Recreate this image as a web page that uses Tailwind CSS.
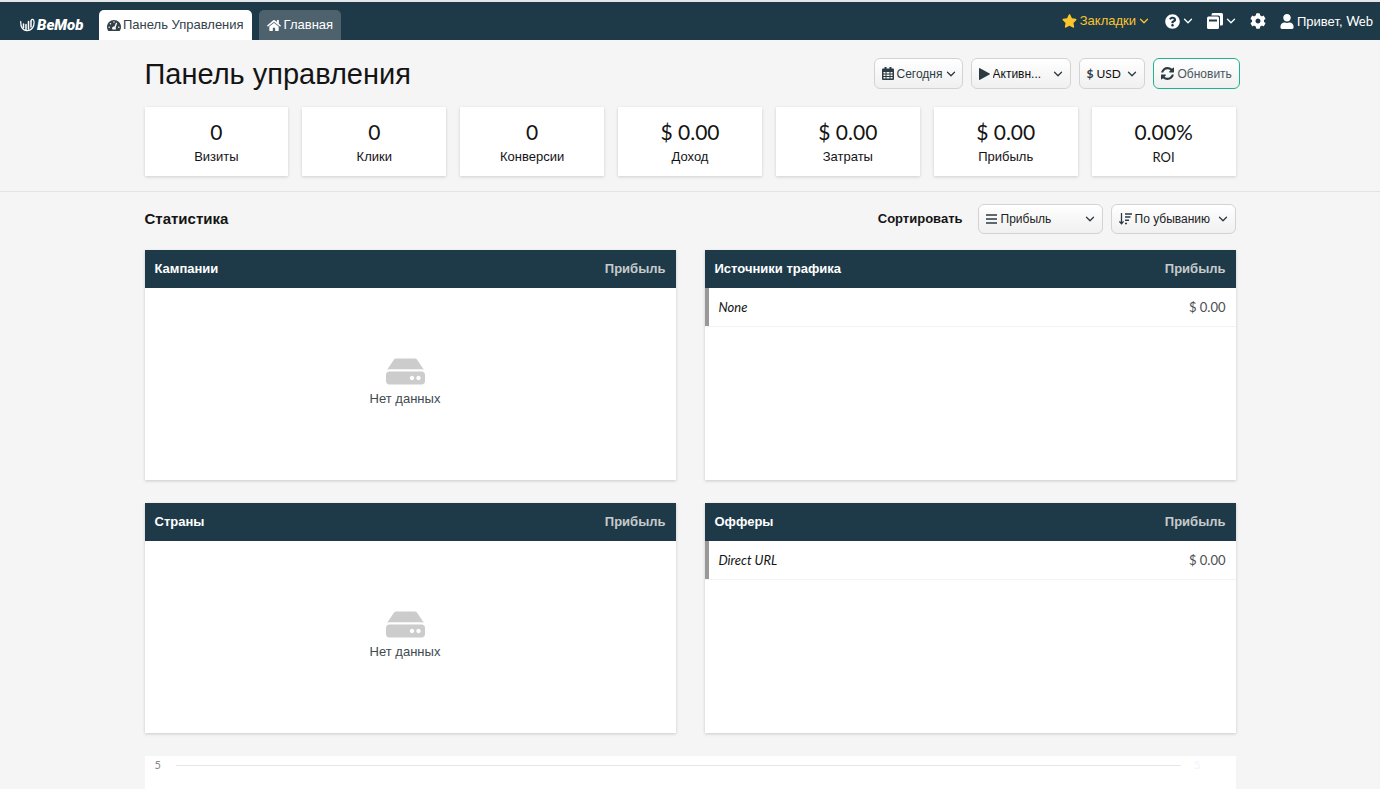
<!DOCTYPE html>
<html lang="ru">
<head>
<meta charset="utf-8">
<meta name="viewport" content="width=device-width, initial-scale=1">
<title>BeMob</title>
<script src="https://cdn.jsdelivr.net/npm/@tailwindcss/browser@4"></script>
</head>
<body class="flex min-h-screen flex-col overflow-x-hidden bg-[#f5f5f5] font-['Liberation_Sans',sans-serif] text-[13px] leading-4 text-[#141414]">

<svg class="hidden" aria-hidden="true">
  <symbol id="chevron" viewBox="0 0 10 10"><path d="M1.500 3.200 5 6.700 8.500 3.200" fill="none" stroke="currentColor" stroke-width="1.300" stroke-linecap="round" stroke-linejoin="round"/></symbol>
  <symbol id="hdd" viewBox="0 0 576 512"><path d="M576 304v96c0 26.510-21.490 48-48 48H48c-26.510 0-48-21.490-48-48v-96c0-26.510 21.490-48 48-48h480c26.510 0 48 21.490 48 48zm-48-80a79.557 79.557 0 0 1 30.777 6.165L462.250 85.374A48.003 48.003 0 0 0 422.311 64H153.689a48 48 0 0 0-39.938 21.374L17.223 230.165A79.557 79.557 0 0 1 48 224h480zm-48 96c-17.673 0-32 14.327-32 32s14.327 32 32 32 32-14.327 32-32-14.327-32-32-32zm-96 0c-17.673 0-32 14.327-32 32s14.327 32 32 32 32-14.327 32-32-14.327-32-32-32z" fill="currentColor"/></symbol>
</svg>

<div class="h-[2px] bg-[#e4e6e9]"></div>
<header class="flex h-[38px] items-end justify-between bg-[#1e3a49] pl-5 pr-[7px] text-white">
  <div class="flex items-end">
    <a href="#" aria-label="BeMob" class="flex h-[30px] w-[79px] items-center gap-[2px]">
      <svg class="h-[14px] w-[15px]" viewBox="0 0 30 28" fill="none" stroke="currentColor" stroke-linecap="round"><path d="M1.500 7C1 17 5 25 14 25c10 0 15-8 14-18-.5-5-5-6-6-1" stroke-width="2.500"/><path d="M7 12v7M12 13v10M17 7v15M22 6v12" stroke-width="3"/></svg>
      <span class="font-[Roboto,sans-serif] text-[15px] font-black italic leading-4">BeMob</span>
    </a>
    <nav class="flex gap-[7px]">
      <a href="#" class="flex h-[30px] items-center gap-[2px] rounded-t-[5px] bg-white px-2 text-[#33414a]">
        <svg class="h-[13px] w-[14px]" viewBox="0 0 576 512" fill="currentColor"><path d="M288 32C129 32 0 161 0 320c0 53 14 102 39 145 6 10 16 15 27 15h444c11 0 21-5 27-15 25-43 39-92 39-145C576 161 447 32 288 32z"/><g fill="#fff"><circle cx="288" cy="115" r="30"/><circle cx="144" cy="185" r="30"/><circle cx="90" cy="330" r="30"/><circle cx="486" cy="330" r="30"/><path d="M396 142c13 4 20 18 16 31l-58 171c19 28 12 55-2 72H224c-38-62 0-115 64-119 7 0 14 1 20 3l57-142c4-13 18-20 31-16z"/></g></svg>
        <span>Панель Управления</span>
      </a>
      <a href="#" class="flex h-[30px] items-center gap-[3px] rounded-t-[5px] bg-[#4e626e] px-2">
        <svg class="h-[13px] w-[14px]" viewBox="0 0 576 512" fill="currentColor"><path d="M280.370 148.260L96 300.110V464a16 16 0 0 0 16 16l112.060-.29a16 16 0 0 0 15.920-16V368a16 16 0 0 1 16-16h64a16 16 0 0 1 16 16v95.640a16 16 0 0 0 16 16.050L464 480a16 16 0 0 0 16-16V300L295.670 148.260a12.190 12.190 0 0 0-15.300 0zM571.600 251.470L488 182.560V44.050a12 12 0 0 0-12-12h-56a12 12 0 0 0-12 12v72.610L318.470 43a48 48 0 0 0-61 0L4.340 251.470a12 12 0 0 0-1.600 16.900l25.500 31A12 12 0 0 0 45.150 301l235.220-193.740a12.190 12.190 0 0 1 15.300 0L530.900 301a12 12 0 0 0 16.900-1.600l25.500-31a12 12 0 0 0-1.700-16.930z"/></svg>
        <span>Главная</span>
      </a>
    </nav>
  </div>
  <div class="flex h-full items-center">
    <button type="button" class="flex items-center gap-[3px] text-[#fcc52c]">
      <svg class="h-[14px] w-[15px]" viewBox="0 0 576 512" fill="currentColor"><path d="M259.300 17.800L194 150.200 47.900 171.500c-26.200 3.800-36.700 36.100-17.700 54.600l105.700 103-25 145.500c-4.500 26.300 23.200 46 46.400 33.700L288 439.600l130.700 68.700c23.200 12.200 50.900-7.400 46.400-33.700l-25-145.500 105.700-103c19-18.500 8.500-50.800-17.700-54.600L382 150.200 316.700 17.800c-11.700-23.600-45.600-23.900-57.400 0z"/></svg>
      <span>Закладки</span><svg class="size-[10px]"><use href="#chevron"/></svg>
    </button>
    <button type="button" aria-label="Помощь" class="ml-4 flex items-center gap-[3px]">
      <svg class="size-[15px]" viewBox="0 0 512 512" fill="currentColor"><path d="M504 256c0 136.997-111.043 248-248 248S8 392.997 8 256C8 119.083 119.043 8 256 8s248 111.083 248 248zM262.655 90c-54.497 0-89.255 22.957-116.549 63.758-3.536 5.286-2.353 12.415 2.715 16.258l34.699 26.310c5.205 3.947 12.621 3.008 16.665-2.122 17.864-22.658 30.113-35.797 57.303-35.797 20.429 0 45.698 13.148 45.698 32.958 0 14.976-12.363 22.667-32.534 33.976C247.128 238.528 216 254.941 216 296v4c0 6.627 5.373 12 12 12h56c6.627 0 12-5.373 12-12v-1.333c0-28.462 83.186-29.647 83.186-106.667 0-58.002-60.165-102-116.531-102zM256 338c-25.365 0-46 20.635-46 46 0 25.364 20.635 46 46 46s46-20.636 46-46c0-25.365-20.635-46-46-46z"/></svg>
      <svg class="size-[10px]"><use href="#chevron"/></svg>
    </button>
    <button type="button" aria-label="Вкладки" class="ml-[14px] flex items-center gap-[3px]">
      <svg class="size-[16px]" viewBox="0 0 32 32" fill="currentColor"><path d="M9 5V3q0-3 3-3h17q3 0 3 3v19q0 3-3 3h-3V8q0-3-3-3z"/><path fill-rule="evenodd" d="M3 7h18q3 0 3 3v19q0 3-3 3H3q-3 0-3-3V10q0-3 3-3zm1 6v4h16v-4z"/></svg>
      <svg class="size-[10px]"><use href="#chevron"/></svg>
    </button>
    <button type="button" aria-label="Настройки" class="ml-[14px]">
      <svg class="size-[16px]" viewBox="0 0 512 512" fill="currentColor"><path d="M487.400 315.700l-42.600-24.600c4.300-23.200 4.300-47 0-70.200l42.600-24.600c4.900-2.800 7.100-8.600 5.500-14-11.100-35.600-30-67.800-54.700-94.600-3.800-4.100-10-5.100-14.800-2.300L380.800 110c-17.900-15.400-38.500-27.300-60.800-35.100V25.800c0-5.600-3.900-10.500-9.400-11.700-36.700-8.200-74.300-7.800-109.200 0-5.500 1.200-9.400 6.100-9.400 11.700V75c-22.200 7.900-42.800 19.800-60.800 35.100L88.700 85.500c-4.900-2.800-11-1.900-14.800 2.300-24.700 26.700-43.600 58.900-54.700 94.600-1.700 5.400.6 11.200 5.500 14L67.300 221c-4.300 23.200-4.300 47 0 70.200l-42.600 24.600c-4.900 2.800-7.100 8.600-5.500 14 11.100 35.600 30 67.800 54.700 94.600 3.800 4.100 10 5.100 14.800 2.300l42.600-24.600c17.900 15.400 38.500 27.300 60.800 35.100v49.200c0 5.600 3.900 10.500 9.400 11.700 36.700 8.200 74.300 7.800 109.200 0 5.500-1.200 9.400-6.100 9.400-11.700v-49.200c22.200-7.900 42.800-19.800 60.800-35.100l42.600 24.600c4.900 2.800 11 1.900 14.800-2.300 24.700-26.700 43.600-58.900 54.700-94.600 1.500-5.500-.7-11.300-5.600-14.100zM256 336c-44.100 0-80-35.900-80-80s35.900-80 80-80 80 35.900 80 80-35.900 80-80 80z"/></svg>
    </button>
    <a href="#" class="ml-[14px] flex items-center gap-[3px]">
      <svg class="h-[15px] w-[14px]" viewBox="0 0 448 512" fill="currentColor"><path d="M224 256c70.700 0 128-57.300 128-128S294.700 0 224 0 96 57.300 96 128s57.300 128 128 128zm89.600 32h-16.700c-22.200 10.200-46.900 16-72.900 16s-50.600-5.800-72.900-16h-16.700C60.200 288 0 348.200 0 422.400V464c0 26.500 21.500 48 48 48h352c26.500 0 48-21.500 48-48v-41.600c0-74.200-60.200-134.400-134.400-134.400z"/></svg>
      <span>Привет, <span class="font-[Lato]">Web</span></span>
    </a>
  </div>
</header>

<main class="flex flex-1 flex-col">
  <section class="border-b border-[#e4e4e4] px-4 pt-[18px] pb-[15px]">
    <div class="mx-auto max-w-[1091px]">
      <div class="-mr-1 flex h-[31px] items-center justify-between">
        <h1 class="text-[29px] leading-8">Панель управления</h1>
        <div class="flex gap-2 text-[12px] text-[#2c3a43]">
          <button type="button" class="flex h-[31px] w-[89px] items-center gap-[3px] rounded-[6px] border border-[#d3d3d3] bg-linear-to-b from-white to-[#f0f0f0] px-[7px]">
            <svg class="h-[13px] w-[12px] shrink-0" viewBox="0 0 24 26"><path fill="currentColor" fill-rule="evenodd" d="M2 3h3V0h4v3h6V0h4v3h3q2 0 2 2v19q0 2-2 2H2q-2 0-2-2V5q0-2 2-2zM3 10v3h4v-3zm6 0v3h6v-3zm8 0v3h4v-3zM3 15v3h4v-3zm6 0v3h6v-3zm8 0v3h4v-3zM3 20v3h4v-3zm6 0v3h6v-3zm8 0v3h4v-3z"/></svg>
            <span>Сегодня</span><svg class="size-[10px] shrink-0"><use href="#chevron"/></svg>
          </button>
          <label class="flex h-[31px] w-[100px] items-center gap-[3px] rounded-[6px] border border-[#d3d3d3] bg-linear-to-b from-white to-[#f0f0f0] px-[7px]">
            <svg class="h-[12px] w-[11px] shrink-0" viewBox="0 0 11 12"><path fill="currentColor" d="M0 .7Q0-.3 1 .2l9.500 5.200q1 .6 0 1.200L1 11.800q-1 .5-1-.5z"/></svg>
            <select aria-label="Статус" class="min-w-0 flex-1 appearance-none bg-transparent text-[#111]"><option>Активн...</option></select>
            <svg class="size-[10px] shrink-0"><use href="#chevron"/></svg>
          </label>
          <label class="flex h-[31px] w-[66px] items-center gap-[3px] rounded-[6px] border border-[#d3d3d3] bg-linear-to-b from-white to-[#f0f0f0] px-[7px]">
            <span class="font-[Lato] font-bold">$</span>
            <select aria-label="Валюта" class="min-w-0 flex-1 appearance-none bg-transparent font-[Lato] font-normal text-[#111]"><option>USD</option></select>
            <svg class="size-[10px] shrink-0"><use href="#chevron"/></svg>
          </label>
          <button type="button" class="flex h-[31px] w-[87px] items-center gap-[4px] rounded-[6px] border border-[#1fb28d] bg-linear-to-b from-white to-[#f0f0f0] px-[7px]">
            <svg class="size-[13px] shrink-0" viewBox="128 128 1536 1536" fill="currentColor"><path d="M1639 1056q0 5-1 7-64 268-268 434.500t-478 166.500q-146 0-282.500-55t-243.500-157l-129 129q-19 19-45 19t-45-19-19-45v-448q0-26 19-45t45-19h448q26 0 45 19t19 45-19 45l-137 137q71 66 161 102t187 36q134 0 250-65t186-179q11-17 53-117 8-23 30-23h192q13 0 22.500 9.500t9.500 22.500zm25-800v448q0 26-19 45t-45 19h-448q-26 0-45-19t-19-45 19-45l138-138q-148-137-349-137-134 0-250 65t-186 179q-11 17-53 117-8 23-30 23h-199q-13 0-22.500-9.500t-9.500-22.500v-7q65-268 270-434.500t480-166.500q146 0 284 55.500t245 156.500l130-129q19-19 45-19t45 19 19 45z"/></svg>
            <span class="text-[#4a565e]">Обновить</span>
          </button>
        </div>
      </div>
      <dl class="mt-[18px] grid grid-cols-7 gap-[14px] text-center">
        <div class="flex h-[69px] flex-col-reverse justify-center gap-[3px] bg-white pb-px shadow-[0_1px_3px_rgba(0,0,0,0.16)]"><dt>Визиты</dt><dd class="font-[Lato] text-[21px] leading-7">0</dd></div>
        <div class="flex h-[69px] flex-col-reverse justify-center gap-[3px] bg-white pb-px shadow-[0_1px_3px_rgba(0,0,0,0.16)]"><dt>Клики</dt><dd class="font-[Lato] text-[21px] leading-7">0</dd></div>
        <div class="flex h-[69px] flex-col-reverse justify-center gap-[3px] bg-white pb-px shadow-[0_1px_3px_rgba(0,0,0,0.16)]"><dt>Конверсии</dt><dd class="font-[Lato] text-[21px] leading-7">0</dd></div>
        <div class="flex h-[69px] flex-col-reverse justify-center gap-[3px] bg-white pb-px shadow-[0_1px_3px_rgba(0,0,0,0.16)]"><dt>Доход</dt><dd class="font-[Lato] text-[21px] leading-7">$ 0.00</dd></div>
        <div class="flex h-[69px] flex-col-reverse justify-center gap-[3px] bg-white pb-px shadow-[0_1px_3px_rgba(0,0,0,0.16)]"><dt>Затраты</dt><dd class="font-[Lato] text-[21px] leading-7">$ 0.00</dd></div>
        <div class="flex h-[69px] flex-col-reverse justify-center gap-[3px] bg-white pb-px shadow-[0_1px_3px_rgba(0,0,0,0.16)]"><dt>Прибыль</dt><dd class="font-[Lato] text-[21px] leading-7">$ 0.00</dd></div>
        <div class="flex h-[69px] flex-col-reverse justify-center gap-[3px] bg-white pb-px shadow-[0_1px_3px_rgba(0,0,0,0.16)]"><dt class="font-[Lato]">ROI</dt><dd class="font-[Lato] text-[21px] leading-7">0.00%</dd></div>
      </dl>
    </div>
  </section>

  <section class="flex flex-1 flex-col px-4 pt-3">
    <div class="mx-auto flex w-full max-w-[1091px] flex-1 flex-col">
      <div class="flex items-center justify-between">
        <h2 class="text-[15px] font-bold">Статистика</h2>
        <div class="flex items-center gap-2">
          <span class="mr-[7px] font-bold">Сортировать</span>
          <label class="flex h-[30px] w-[125px] items-center gap-[4px] rounded-[6px] border border-[#d3d3d3] bg-linear-to-b from-white to-[#f0f0f0] px-[7px] text-[12px] text-[#2c3a43]">
            <svg class="h-[10px] w-[11px] shrink-0" viewBox="0 0 11 10"><path d="M0 1h11M0 5h11M0 9h11" stroke="currentColor" stroke-width="1.600"/></svg>
            <select aria-label="Поле сортировки" class="min-w-0 flex-1 appearance-none bg-transparent text-[#222]"><option>Прибыль</option></select>
            <svg class="size-[10px] shrink-0"><use href="#chevron"/></svg>
          </label>
          <label class="flex h-[30px] w-[125px] items-center gap-[3px] rounded-[6px] border border-[#d3d3d3] bg-linear-to-b from-white to-[#f0f0f0] px-[7px] text-[12px] text-[#2c3a43]">
            <svg class="h-[12px] w-[13px] shrink-0" viewBox="0 0 13 12" fill="none" stroke="currentColor"><path d="M2.500 0v10.500M.4 8.400l2.100 2.300 2.100-2.300" stroke-width="1.300"/><path d="M6 1h7M6 4h5.500M6 7.300h4M6 10.500h2" stroke-width="1.500"/></svg>
            <select aria-label="Порядок сортировки" class="min-w-0 flex-1 appearance-none bg-transparent text-[#222]"><option>По убыванию</option></select>
            <svg class="size-[10px] shrink-0"><use href="#chevron"/></svg>
          </label>
        </div>
      </div>

      <div class="mt-4 grid grid-cols-2 gap-x-[29px] gap-y-[23px]">
        <div class="min-h-[230px] bg-white shadow-[0_1px_3px_rgba(0,0,0,0.18)]">
          <table class="w-full border-separate border-spacing-0">
            <thead class="bg-[#1e3a49]"><tr class="h-[38px]"><th class="px-[10px] text-left text-white">Кампании</th><th class="px-[10px] text-right text-[#c8cacb]">Прибыль</th></tr></thead>
            <tbody><tr><td colspan="2" class="h-[192px] pb-[7px] pr-[10px] text-center text-[#3f4a50]"><svg class="mx-auto mb-[2px] h-[35px] w-[39px] text-[#cccccc]"><use href="#hdd"/></svg>Нет данных</td></tr></tbody>
          </table>
        </div>
        <div class="min-h-[230px] bg-white shadow-[0_1px_3px_rgba(0,0,0,0.18)]">
          <table class="w-full border-separate border-spacing-0">
            <thead class="bg-[#1e3a49]"><tr class="h-[38px]"><th class="px-[10px] text-left text-white">Источники трафика</th><th class="px-[10px] text-right text-[#c8cacb]">Прибыль</th></tr></thead>
            <tbody class="font-[Lato]"><tr class="h-[38px] shadow-[0_1px_0_#f3f3f3]"><td class="border-l-4 border-[#999] px-[10px] italic">None</td><td class="px-[10px] text-right text-[#4a4f52]">$ 0.00</td></tr></tbody>
          </table>
        </div>
        <div class="min-h-[230px] bg-white shadow-[0_1px_3px_rgba(0,0,0,0.18)]">
          <table class="w-full border-separate border-spacing-0">
            <thead class="bg-[#1e3a49]"><tr class="h-[38px]"><th class="px-[10px] text-left text-white">Страны</th><th class="px-[10px] text-right text-[#c8cacb]">Прибыль</th></tr></thead>
            <tbody><tr><td colspan="2" class="h-[192px] pb-[7px] pr-[10px] text-center text-[#3f4a50]"><svg class="mx-auto mb-[2px] h-[35px] w-[39px] text-[#cccccc]"><use href="#hdd"/></svg>Нет данных</td></tr></tbody>
          </table>
        </div>
        <div class="min-h-[230px] bg-white shadow-[0_1px_3px_rgba(0,0,0,0.18)]">
          <table class="w-full border-separate border-spacing-0">
            <thead class="bg-[#1e3a49]"><tr class="h-[38px]"><th class="px-[10px] text-left text-white">Офферы</th><th class="px-[10px] text-right text-[#c8cacb]">Прибыль</th></tr></thead>
            <tbody class="font-[Lato]"><tr class="h-[38px] shadow-[0_1px_0_#f3f3f3]"><td class="border-l-4 border-[#999] px-[10px] italic">Direct URL</td><td class="px-[10px] text-right text-[#4a4f52]">$ 0.00</td></tr></tbody>
          </table>
        </div>
      </div>

      <div class="mt-[23px] flex flex-1 items-start bg-white pl-[10px] pr-[35px] pt-px font-[Lato] text-[11px]">
        <span class="w-[21px] text-[#888]">5</span>
        <div class="mt-2 flex-1 border-t border-[#e6e6e6]"></div>
        <span class="w-5 text-right text-[#eef6fd]">5</span>
      </div>
    </div>
  </section>
</main>
</body>
</html>
